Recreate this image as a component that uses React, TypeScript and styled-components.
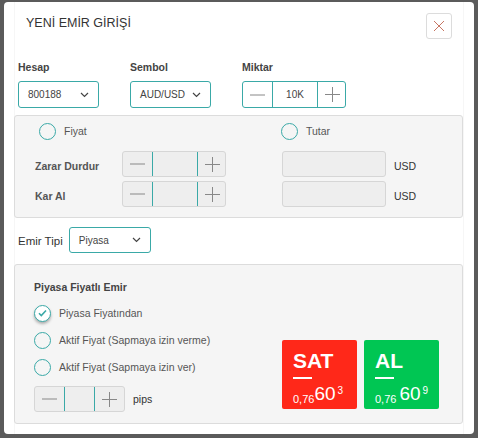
import React from "react";
import styled, { createGlobalStyle } from "styled-components";

const Global = createGlobalStyle`
  html, body { margin: 0; padding: 0; }
  body {
    background: #5b5b5b;
    font-family: "Liberation Sans", Arial, sans-serif;
    width: 478px;
    height: 438px;
    overflow: hidden;
  }
  * { box-sizing: border-box; }
`;

const TEAL = "#3aa9a7";

const Page = styled.div`
  padding: 2px 4px 0 4px;
`;

const Modal = styled.div`
  width: 470px;
  height: 432px;
  background: #fff;
  border-radius: 4px;
`;

const Inner = styled.div`
  height: 100%;
  margin: 0 10px;
  border-left: 1px solid #f6f6f6;
  border-right: 1px solid #f6f6f6;
`;

const Header = styled.div`
  display: flex;
  align-items: center;
  justify-content: space-between;
  padding: 11px 11px 0 11px;
`;

const Title = styled.div`
  font-size: 12.5px;
  color: #333;
  margin-top: -6px;
`;

const CloseBtn = styled.div`
  width: 26px;
  height: 26px;
  border: 1px solid #dcdcdc;
  border-radius: 3px;
  display: flex;
  align-items: center;
  justify-content: center;
`;

const Body = styled.div`
  margin-left: -1px;
`;

const TopFields = styled.div`
  display: grid;
  grid-template-columns: 81px 81px 104px;
  column-gap: 31px;
  padding-left: 4px;
  margin-top: 22px;
  margin-bottom: 7px;
`;

const FieldLabel = styled.div`
  font-size: 10.5px;
  font-weight: bold;
  color: #444;
  line-height: 13px;
  margin-bottom: 7px;
`;

const SelectBox = styled.div<{ $w?: number; $h?: number }>`
  width: ${(p) => p.$w ?? 81}px;
  height: ${(p) => p.$h ?? 27}px;
  border: 1px solid ${TEAL};
  border-radius: 3px;
  background: #fff;
  display: flex;
  align-items: center;
  justify-content: space-between;
  padding: 0 9px;
  font-size: 10px;
  color: #444;
`;

const Stepper = styled.div<{ $gray?: boolean; $mid: number; $h?: number }>`
  display: grid;
  grid-template-columns: 29px ${(p) => p.$mid}px 29px;
  height: ${(p) => p.$h ?? 26}px;
  border: 1px solid ${(p) => (p.$gray ? "#d6d6d6" : TEAL)};
  border-radius: 3px;
  background: ${(p) => (p.$gray ? "#eeeeee" : "#fff")};
`;

const StepCell = styled.div<{ $mid?: boolean }>`
  display: flex;
  align-items: center;
  justify-content: center;
  font-size: 10px;
  color: #444;
  ${(p) => (p.$mid ? `border-left: 1px solid ${TEAL}; border-right: 1px solid ${TEAL};` : "")}
`;

const Panel = styled.div<{ $pad: string }>`
  background: #f5f5f5;
  border: 1px solid #dcdcdc;
  border-radius: 3px;
  padding: ${(p) => p.$pad};
`;

const RadioRow = styled.div`
  display: grid;
  grid-template-columns: 242px auto;
  padding-left: 4px;
`;

const RadioItem = styled.label`
  display: flex;
  align-items: center;
  gap: 8px;
  font-size: 10.5px;
  color: #555;
  height: 16px;
`;

const RadioCircle = styled.span<{ $checked?: boolean }>`
  width: 17px;
  height: 17px;
  border-radius: 50%;
  border: 1.5px solid ${TEAL};
  display: inline-flex;
  align-items: center;
  justify-content: center;
  flex-shrink: 0;
  background: ${(p) => (p.$checked ? "#fff" : "transparent")};
  box-shadow: ${(p) => (p.$checked ? "0 2px 3px rgba(0,0,0,0.3)" : "none")};
`;

const FieldGrid = styled.div`
  display: grid;
  grid-template-columns: 87px 104px 56px 104px auto;
  row-gap: 4px;
  margin-top: 12px;
  align-items: center;
`;

const RowLabel = styled.div`
  font-size: 10.5px;
  font-weight: bold;
  color: #555;
  padding-top: 4px;
`;

const GrayInput = styled.div`
  height: 26px;
  background: #eeeeee;
  border: 1px solid #d6d6d6;
  border-radius: 3px;
`;

const Unit = styled.div`
  font-size: 10.5px;
  color: #333;
  padding-left: 8px;
  padding-top: 3px;
`;

const TypeRow = styled.div`
  display: flex;
  align-items: center;
  gap: 6px;
  padding-left: 4px;
  margin: 9px 0 11px;
`;

const TypeLabel = styled.div`
  font-size: 11.5px;
  color: #333;
  padding-top: 2px;
`;

const MarketPanel = styled.div`
  display: flex;
  justify-content: space-between;
`;

const LeftCol = styled.div`
  display: flex;
  flex-direction: column;
`;

const SectionTitle = styled.div`
  font-size: 10.5px;
  font-weight: bold;
  color: #444;
  line-height: 13px;
  margin-bottom: 11px;
`;

const RadioList = styled.div`
  display: flex;
  flex-direction: column;
  gap: 11px;
`;

const PipsRow = styled.div`
  display: flex;
  align-items: center;
  gap: 8px;
  margin-top: 11px;
  font-size: 10.5px;
  color: #333;
`;

const Buttons = styled.div`
  display: flex;
  gap: 7px;
  align-self: flex-end;
  margin-bottom: 3px;
`;

const TradeBtn = styled.div<{ $bg: string }>`
  width: 75px;
  height: 69px;
  background: ${(p) => p.$bg};
  border-radius: 2px;
  color: #fff;
  padding: 11px 0 0 11px;
`;

const BtnTitle = styled.div`
  font-size: 21px;
  font-weight: bold;
  line-height: 20px;
`;

const Bar = styled.div`
  width: 19px;
  height: 2px;
  background: #fff;
  margin-top: 6px;
`;

const Price = styled.div`
  display: flex;
  align-items: flex-start;
  margin-top: 5px;
  white-space: nowrap;
`;

const Small = styled.span`
  font-size: 11px;
  margin-top: 9px;
`;

const Big = styled.span`
  font-size: 19px;
  line-height: 20px;
`;

const Sup = styled.span`
  font-size: 10px;
  margin-left: 2px;
  margin-top: 1px;
`;

const Chevron = () => (
  <svg width="9" height="6" viewBox="0 0 9 6">
    <path d="M1 1l3.5 3.5L8 1" fill="none" stroke="#444" strokeWidth="1.2" />
  </svg>
);

const Minus = () => (
  <svg width="15" height="2" viewBox="0 0 15 2">
    <path d="M0 1h15" stroke="#888" strokeWidth="1" />
  </svg>
);

const Plus = () => (
  <svg width="15" height="15" viewBox="0 0 15 15">
    <path d="M0 7.5h15M7.5 0v15" stroke="#888" strokeWidth="1" />
  </svg>
);

const Step: React.FC<{ gray?: boolean; mid: number; value?: string; h?: number }> = ({ gray, mid, value, h }) => (
  <Stepper $gray={gray} $mid={mid} $h={h}>
    <StepCell><Minus /></StepCell>
    <StepCell $mid>{value}</StepCell>
    <StepCell><Plus /></StepCell>
  </Stepper>
);

const Radio: React.FC<{ label: string; checked?: boolean }> = ({ label, checked }) => (
  <RadioItem>
    <RadioCircle $checked={checked}>
      {checked && (
        <svg width="9" height="8" viewBox="0 0 9 8">
          <path d="M1 4.2l2.3 2.3L8 1.5" fill="none" stroke={TEAL} strokeWidth="1.6" />
        </svg>
      )}
    </RadioCircle>
    {label}
  </RadioItem>
);

export default function App() {
  return (
    <>
      <Global />
      <Page>
        <Modal>
          <Inner>
            <Header>
              <Title>YENİ EMİR GİRİŞİ</Title>
              <CloseBtn>
                <svg width="12" height="12" viewBox="0 0 12 12">
                  <path d="M1 1l10 10M11 1L1 11" stroke="#c77663" strokeWidth="1" />
                </svg>
              </CloseBtn>
            </Header>
            <Body>
              <TopFields>
                <div>
                  <FieldLabel>Hesap</FieldLabel>
                  <SelectBox>800188<Chevron /></SelectBox>
                </div>
                <div>
                  <FieldLabel>Sembol</FieldLabel>
                  <SelectBox>AUD/USD<Chevron /></SelectBox>
                </div>
                <div>
                  <FieldLabel>Miktar</FieldLabel>
                  <Step mid={46} value="10K" h={27} />
                </div>
              </TopFields>
              <Panel $pad="7px 0 10px 20px">
                <RadioRow>
                  <Radio label="Fiyat" />
                  <Radio label="Tutar" />
                </RadioRow>
                <FieldGrid>
                  <RowLabel>Zarar Durdur</RowLabel>
                  <Step gray mid={46} />
                  <div />
                  <GrayInput />
                  <Unit>USD</Unit>
                  <RowLabel>Kar Al</RowLabel>
                  <Step gray mid={46} />
                  <div />
                  <GrayInput />
                  <Unit>USD</Unit>
                </FieldGrid>
              </Panel>
              <TypeRow>
                <TypeLabel>Emir Tipi</TypeLabel>
                <SelectBox $w={82} $h={26}>Piyasa<Chevron /></SelectBox>
              </TypeRow>
              <Panel $pad="16px 23px 11px 19px">
                <MarketPanel>
                  <LeftCol>
                    <SectionTitle>Piyasa Fiyatlı Emir</SectionTitle>
                    <RadioList>
                      <Radio label="Piyasa Fiyatından" checked />
                      <Radio label="Aktif Fiyat (Sapmaya izin verme)" />
                      <Radio label="Aktif Fiyat (Sapmaya izin ver)" />
                    </RadioList>
                    <PipsRow>
                      <Step gray mid={31} />
                      pips
                    </PipsRow>
                  </LeftCol>
                  <Buttons>
                    <TradeBtn $bg="#ff2819">
                      <BtnTitle>SAT</BtnTitle>
                      <Bar />
                      <Price><Small>0,76</Small><Big>60</Big><Sup>3</Sup></Price>
                    </TradeBtn>
                    <TradeBtn $bg="#00c653">
                      <BtnTitle>AL</BtnTitle>
                      <Bar />
                      <Price><Small>0,76&nbsp;</Small><Big>60</Big><Sup>9</Sup></Price>
                    </TradeBtn>
                  </Buttons>
                </MarketPanel>
              </Panel>
            </Body>
          </Inner>
        </Modal>
      </Page>
    </>
  );
}
